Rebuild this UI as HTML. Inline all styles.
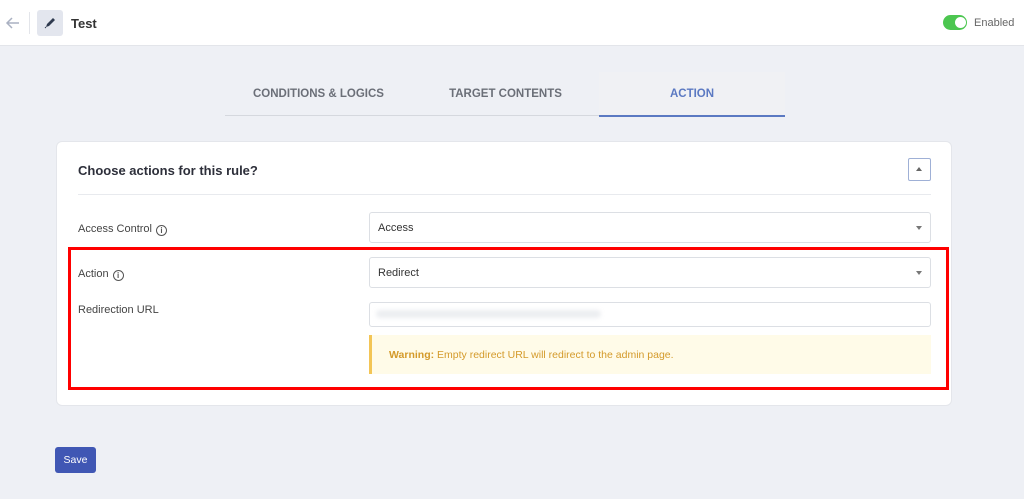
<!DOCTYPE html>
<html><head><style>
*{box-sizing:border-box;margin:0;padding:0}
body{width:1024px;height:499px;background:#eef0f5;font-family:"Liberation Sans",sans-serif;position:relative;overflow:hidden;color:#333}
.abs{position:absolute}
.hdr{left:0;top:0;width:1024px;height:46px;background:#fff;border-bottom:1px solid #e3e5ea}
.tab{top:72px;height:44px;font-size:11.5px;font-weight:bold;color:#6b6f78;display:flex;align-items:center;justify-content:center}
.card{left:56px;top:141px;width:896px;height:265px;background:#fff;border-radius:6px;border:1px solid #e4e6eb}
.lbl{font-size:11px;color:#444}
.sel{left:369px;width:562px;height:31px;border:1px solid #dcdfe4;border-radius:3px;background:#fff;font-size:11px;color:#333;padding:0 8px;display:flex;align-items:center}
.sel:after{content:"";position:absolute;right:8px;top:13px;border:3.5px solid transparent;border-top:4px solid #777}
.info{display:inline-block;width:11px;height:11px;border:1px solid #555;border-radius:50%;font-size:8px;text-align:center;line-height:9px;vertical-align:-1px;margin-left:4px;font-weight:bold;color:#555}
</style></head><body>
<div class="abs hdr"></div>
<svg class="abs" style="left:5px;top:15px" width="16" height="16" viewBox="0 0 16 16"><path d="M14 8H2M7 3L2 8l5 5" stroke="#aab1c2" stroke-width="1.5" fill="none"/></svg>
<div class="abs" style="left:29px;top:12px;width:1px;height:22px;background:#e3e5ea"></div>
<div class="abs" style="left:37px;top:10px;width:26px;height:26px;background:#e3e6ee;border-radius:3px"></div>
<svg class="abs" style="left:43px;top:16px" width="14" height="14" viewBox="0 0 14 14"><path d="M3 11l1-3 6-6 2 2-6 6z" fill="#2f3a4f"/><path d="M2 12l1-1" stroke="#2f3a4f"/></svg>
<div class="abs" style="left:71px;top:16px;font-size:13px;font-weight:bold;color:#333">Test</div>
<div class="abs" style="left:943px;top:15px;width:24px;height:15px;background:#4cc650;border-radius:8px"></div>
<div class="abs" style="left:955px;top:17px;width:11px;height:11px;background:#fff;border-radius:50%"></div>
<div class="abs" style="left:974px;top:17px;font-size:11px;color:#666">Enabled</div>
<div class="abs" style="left:225px;top:115px;width:560px;height:1px;background:#d5d8de"></div>
<div class="abs tab" style="left:225px;width:187px">CONDITIONS &amp; LOGICS</div>
<div class="abs tab" style="left:412px;width:187px">TARGET CONTENTS</div>
<div class="abs tab" style="left:599px;width:186px;background:#f0f1f4;color:#5b79c2;border-bottom:2px solid #5b79c2;height:45px">ACTION</div>
<div class="abs card"></div>
<div class="abs" style="left:78px;top:163px;font-size:13px;font-weight:bold;color:#2d2f3a">Choose actions for this rule?</div>
<div class="abs" style="left:908px;top:158px;width:23px;height:23px;border:1px solid #9fb0d6;border-radius:2px"></div>
<div class="abs" style="left:916px;top:167px;border:3.5px solid transparent;border-bottom:4px solid #666;border-top:0"></div>
<div class="abs" style="left:78px;top:194px;width:853px;height:1px;background:#e8eaee"></div>
<div class="abs lbl" style="left:78px;top:223px">Access Control<span class="info">i</span></div>
<div class="abs sel" style="top:212px">Access</div>
<div class="abs lbl" style="left:78px;top:268px">Action<span class="info">i</span></div>
<div class="abs sel" style="top:257px">Redirect</div>
<div class="abs lbl" style="left:78px;top:304px">Redirection URL</div>
<div class="abs" style="left:369px;top:302px;width:562px;height:25px;border:1px solid #dcdfe4;border-radius:3px"></div>
<div class="abs" style="left:376px;top:310px;width:225px;height:8px;background:#eceef1;border-radius:4px;filter:blur(2px)"></div>
<div class="abs" style="left:369px;top:335px;width:562px;height:39px;background:#fffbe8;border-left:3px solid #f3c556;font-size:10.5px;color:#d49a2a;padding:14px 0 0 17px"><b>Warning:</b> Empty redirect URL will redirect to the admin page.</div>
<div class="abs" style="left:68px;top:247px;width:881px;height:143px;border:3px solid #f00"></div>
<div class="abs" style="left:55px;top:447px;width:41px;height:26px;background:#4057b4;border-radius:3px;color:#fff;font-size:10.5px;display:flex;align-items:center;justify-content:center">Save</div>
</body></html>
